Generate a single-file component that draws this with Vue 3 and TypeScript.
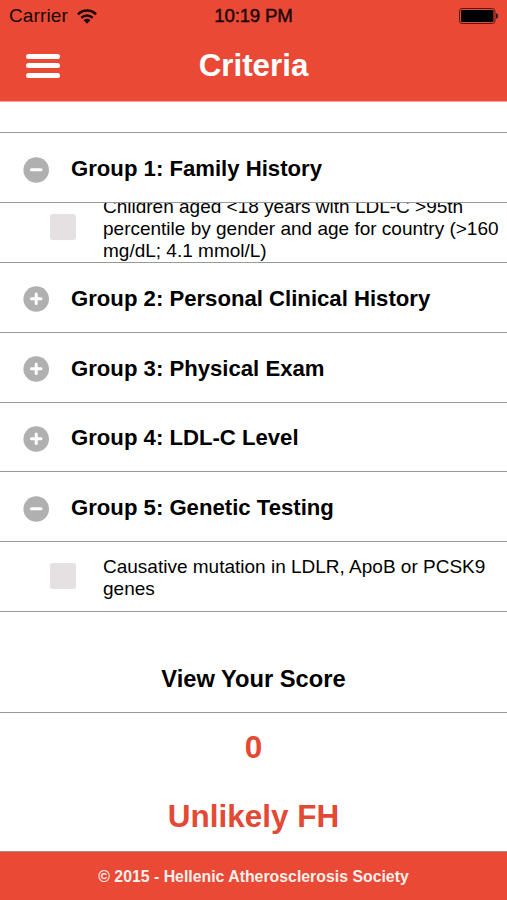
<script setup lang="ts">
import { ref } from 'vue'

interface Group {
  title: string
  items: string[]
}

const groups: Group[] = [
  {
    title: 'Group 1: Family History',
    items: ['Children aged <18 years with LDL-C >95th percentile by gender and age for country (>160 mg/dL; 4.1 mmol/L)'],
  },
  { title: 'Group 2: Personal Clinical History', items: [] },
  { title: 'Group 3: Physical Exam', items: [] },
  { title: 'Group 4: LDL-C Level', items: [] },
  {
    title: 'Group 5: Genetic Testing',
    items: ['Causative mutation in LDLR, ApoB or PCSK9 genes'],
  },
]

const open = ref<boolean[]>([true, false, false, false, true])
const toggle = (i: number) => {
  open.value[i] = !open.value[i]
}
</script>

<template>
  <div class="screen">
    <header>
      <div class="status">
        <span class="carrier">
          <span>Carrier</span>
          <svg width="20" height="15" viewBox="0 0 20 15" fill="none" stroke="#170705" stroke-width="2.5">
            <path d="M1 5.3a12.6 12.6 0 0 1 18 0" />
            <path d="M4.3 8.9a8.1 8.1 0 0 1 11.4 0" />
            <path d="M10 14.8l-3.4-3.6a4.8 4.8 0 0 1 6.8 0z" fill="#170705" stroke="none" />
          </svg>
        </span>
        <span class="clock">10:19 PM</span>
        <svg class="battery" width="39" height="16" viewBox="0 0 39 16">
          <rect x=".5" y=".5" width="35.5" height="15" rx="2.6" fill="none" stroke="#521a13" stroke-width="1" />
          <rect x="2" y="2" width="32.5" height="12" rx="1.2" fill="#000" />
          <path d="M37 5.2q2 .6 2 2.8t-2 2.8z" fill="#170705" />
        </svg>
      </div>
      <div class="nav">
        <button class="menu" aria-label="Menu"><i /><i /><i /></button>
        <h1>Criteria</h1>
      </div>
    </header>

    <main>
      <section v-for="(g, i) in groups" :key="g.title" :class="{ first: i === 0 }">
        <div class="group" @click="toggle(i)">
          <svg width="26" height="26" viewBox="0 0 26 26" stroke="#fff" stroke-width="3" stroke-linecap="round">
            <circle cx="13.2" cy="13" r="12.8" fill="#b0b0b0" stroke="none" />
            <path d="M8.4 12.8h9.6" />
            <path v-if="!open[i]" d="M13.2 8v9.6" />
          </svg>
          <h2>{{ g.title }}</h2>
        </div>
        <template v-if="open[i]">
          <div v-for="item in g.items" :key="item" class="item">
            <span class="check" />
            <p>{{ item }}</p>
          </div>
        </template>
      </section>
    </main>

    <h2 class="view">View Your Score</h2>
    <div class="score">
      <p>0</p>
      <p>Unlikely FH</p>
    </div>
    <footer>© 2015 - Hellenic Atherosclerosis Society</footer>
  </div>
</template>

<style>
body {
  margin: 0;
}
</style>

<style scoped>
* {
  box-sizing: border-box;
}
h1, h2, p {
  margin: 0;
}
.screen {
  width: 507px;
  height: 900px;
  display: flex;
  flex-direction: column;
  overflow: hidden;
  background: #fff;
  color: #000;
  font-family: "Liberation Sans", Arial, sans-serif;
}
header {
  height: 101px;
  flex: none;
  background: #ea4935;
  box-shadow: 0 1px #f4a69c;
}
.status {
  height: 32px;
  display: grid;
  grid-template-columns: 1fr auto 1fr;
  align-items: center;
  padding: 0 9px;
  font-size: 19px;
  color: #170705;
}
.carrier {
  display: flex;
  align-items: center;
  gap: 9px;
  letter-spacing: .12px;
}
.clock {
  font-size: 18.7px;
  letter-spacing: -.2px;
  -webkit-text-stroke: .45px #170705;
}
.battery {
  justify-self: end;
}
.nav {
  height: 67px;
  display: grid;
  grid-template-columns: 60px 1fr 60px;
  align-items: center;
}
.menu {
  display: flex;
  flex-direction: column;
  gap: 4.5px;
  width: 34px;
  margin-left: 26px;
  padding: 0;
  border: 0;
  background: none;
}
.menu i {
  height: 5px;
  border-radius: 2.5px;
  background: #fff;
}
h1 {
  text-align: center;
  color: #fff;
  font-size: 31.3px;
  line-height: 66px;
  padding-top: 1px;
}
main {
  flex: none;
  padding-top: 31.2px;
  border-bottom: 1px solid #999;
}
.group {
  height: 69.8px;
  border-top: 1px solid #999;
  display: flex;
  align-items: center;
  gap: 22px;
  padding: 4px 0 0 23px;
}
.group h2 {
  font-size: 22.15px;
  line-height: 26px;
  padding-bottom: 1px;
}
.item {
  height: 69.8px;
  border-top: 1px solid #999;
  display: flex;
  align-items: center;
  gap: 27px;
  padding: 0 4px 0 50px;
  overflow: hidden;
}
.first .item {
  height: 60px;
  align-items: flex-end;
}
.item p {
  flex: 1;
  font-size: 19px;
  line-height: 22px;
  padding-top: 2px;
}
.first .item p {
  padding-top: 0;
}
.check {
  flex: none;
  width: 26px;
  height: 26px;
  margin-bottom: 1px;
  border-radius: 3px;
  background: #e5e1e3;
}
.first .check {
  margin-bottom: 22px;
}
.view {
  flex: none;
  height: 100px;
  padding-top: 53.4px;
  text-align: center;
  font-size: 23.7px;
  line-height: 28px;
}
.score {
  flex: 1;
  min-height: 0;
  border-top: 1px solid #999;
  border-bottom: 1px solid #b08a88;
  color: #e34a36;
  text-align: center;
  font-size: 31.5px;
  font-weight: bold;
  line-height: 69.5px;
}
footer {
  height: 48px;
  flex: none;
  background: #ea4935;
  color: #fff0ec;
  text-align: center;
  font-size: 15.85px;
  font-weight: bold;
  line-height: 49px;
}
</style>
